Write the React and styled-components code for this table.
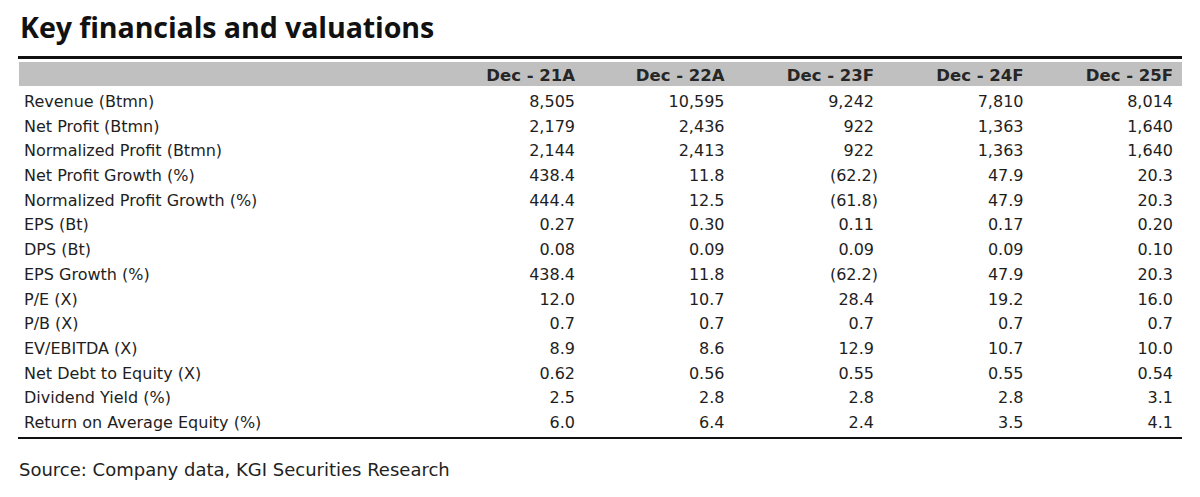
import React from 'react';
import styled, { createGlobalStyle } from 'styled-components';

const GlobalStyle = createGlobalStyle`
    body {
        margin: 0;
        background: #ffffff;
        font-family: "DejaVu Sans", "Liberation Sans", sans-serif;
        color: #1e1e1e;
    }
`;

const Page = styled.div`
    width: 1200px;
    height: 497px;
    padding: 9px 18px 0 18px;
    box-sizing: border-box;
    overflow: hidden;
`;

const Title = styled.h1`
    margin: 0 0 11px 2px;
    font-family: "Open Sans", "DejaVu Sans", sans-serif;
    font-weight: 700;
    font-size: 28.6px;
    line-height: 36px;
    color: #111;
    letter-spacing: -0.1px;
`;

const Table = styled.div`
    border-top: 3px solid #111;
    border-bottom: 2px solid #111;
    padding-bottom: 1px;
`;

const Row = styled.div`
    display: grid;
    grid-template-columns: 1fr repeat(5, 149.5px);
    padding: 0 9px 0 6px;
    height: ${p => (p.head ? '24px' : '24.7px')};
    line-height: ${p => (p.head ? '21px' : '24.7px')};
    font-size: ${p => (p.head ? '16.5px' : '16px')};
    font-weight: ${p => (p.head ? 700 : 400)};
    background: ${p => (p.head ? '#c0c0c0' : 'transparent')};
    color: ${p => (p.head ? '#262626' : 'inherit')};
    margin: ${p => (p.head ? '3px 0 4px 1px' : '0')};
    padding-top: ${p => (p.head ? '3px' : '0')};
    box-sizing: border-box;
    white-space: nowrap;
`;

const Label = styled.span`
    text-align: left;
`;

const Cell = styled.span`
    text-align: right;
    margin-right: ${p => (p.neg ? '-4px' : '0')};
`;

const Source = styled.p`
    margin: 19px 0 0 1px;
    font-size: 18px;
    line-height: 24px;
    color: #222;
`;

const years = ['Dec - 21A', 'Dec - 22A', 'Dec - 23F', 'Dec - 24F', 'Dec - 25F'];

const rows = [
    ['Revenue (Btmn)', '8,505', '10,595', '9,242', '7,810', '8,014'],
    ['Net Profit (Btmn)', '2,179', '2,436', '922', '1,363', '1,640'],
    ['Normalized Profit (Btmn)', '2,144', '2,413', '922', '1,363', '1,640'],
    ['Net Profit Growth (%)', '438.4', '11.8', '(62.2)', '47.9', '20.3'],
    ['Normalized Profit Growth (%)', '444.4', '12.5', '(61.8)', '47.9', '20.3'],
    ['EPS (Bt)', '0.27', '0.30', '0.11', '0.17', '0.20'],
    ['DPS (Bt)', '0.08', '0.09', '0.09', '0.09', '0.10'],
    ['EPS Growth (%)', '438.4', '11.8', '(62.2)', '47.9', '20.3'],
    ['P/E (X)', '12.0', '10.7', '28.4', '19.2', '16.0'],
    ['P/B (X)', '0.7', '0.7', '0.7', '0.7', '0.7'],
    ['EV/EBITDA (X)', '8.9', '8.6', '12.9', '10.7', '10.0'],
    ['Net Debt to Equity (X)', '0.62', '0.56', '0.55', '0.55', '0.54'],
    ['Dividend Yield (%)', '2.5', '2.8', '2.8', '2.8', '3.1'],
    ['Return on Average Equity (%)', '6.0', '6.4', '2.4', '3.5', '4.1'],
];

const App = () => {
    return (
        <Page>
            <GlobalStyle />
            <Title>Key financials and valuations</Title>
            <Table>
                <Row head>
                    <Label></Label>
                    {years.map(y => <Cell key={y}>{y}</Cell>)}
                </Row>
                {rows.map(([label, ...vals]) => (
                    <Row key={label}>
                        <Label>{label}</Label>
                        {vals.map((v, i) => (
                            <Cell key={i} neg={v.startsWith('(')}>{v}</Cell>
                        ))}
                    </Row>
                ))}
            </Table>
            <Source>Source: Company data, KGI Securities Research</Source>
        </Page>
    );
};

export default App;
